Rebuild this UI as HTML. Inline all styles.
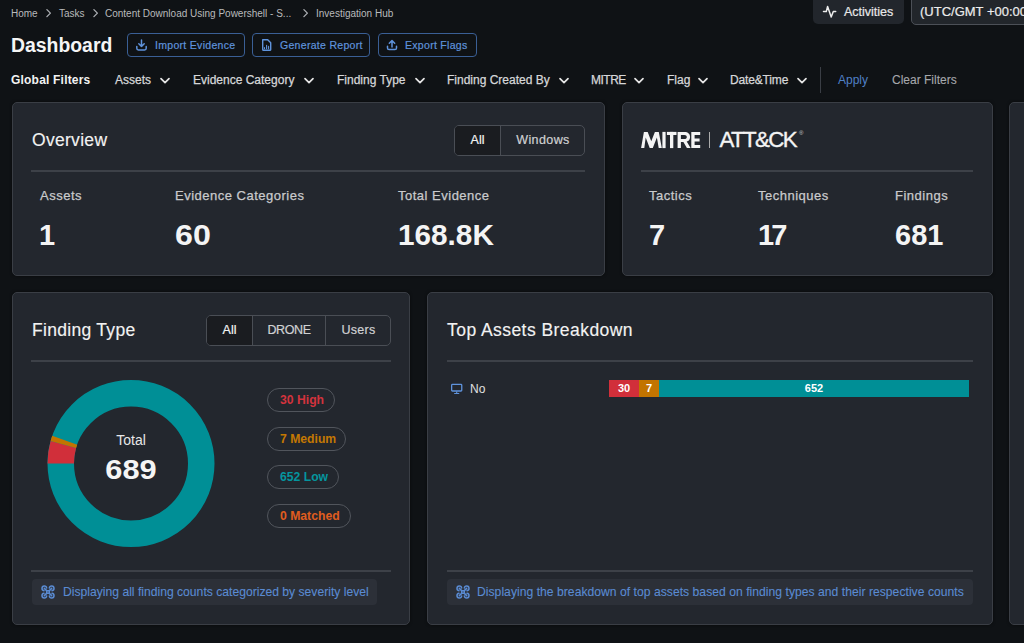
<!DOCTYPE html>
<html><head><meta charset="utf-8">
<style>
*{box-sizing:border-box;margin:0;padding:0}
html,body{width:1024px;height:643px;overflow:hidden;background:#0f1215;font-family:"Liberation Sans",sans-serif;color:#f2f2f2}
.a{position:absolute;white-space:nowrap}
.bc{font-size:10px;color:#b9babc;top:8px;line-height:12px}
.btn{position:absolute;top:33px;height:24px;border:1px solid #3a5f95;border-radius:4px}
.bt{position:absolute;top:39px;font-size:10.5px;line-height:12px;color:#5f93dc;letter-spacing:0.3px;-webkit-text-stroke:0.2px currentColor}
.flt{top:73px;font-size:12px;line-height:14px;color:#d6d7d9;-webkit-text-stroke:0.25px currentColor}
.card{position:absolute;background:#23272e;border:1px solid #3a3e45;border-radius:5px;box-shadow:0 0 3px rgba(0,0,0,.55)}
.div{position:absolute;height:2px;background:#3d4148}
.lbl{font-size:13px;color:#c9cacc;line-height:15px;letter-spacing:0.5px;-webkit-text-stroke:0.25px currentColor}
.num{font-size:29px;font-weight:700;color:#f4f4f4;line-height:32px}
.title{font-size:17.5px;color:#f2f2f2;line-height:20px;letter-spacing:0.3px;-webkit-text-stroke:0.15px currentColor}
.tog{position:absolute;border:1px solid #4a4e55;border-radius:5px;overflow:hidden;display:flex}
.tog div{height:100%;display:flex;align-items:center;justify-content:center;font-size:12.5px;-webkit-text-stroke:0.2px currentColor;color:#d0d1d3;border-left:1px solid #4a4e55;padding-bottom:1px}
.tog div:first-child{border-left:none;background:#1a1c20;color:#f2f2f2}
.pill{position:absolute;left:267px;height:24px;border:1px solid #51555c;border-radius:12px;font-size:12.2px;font-weight:700;line-height:22px;padding-left:12px}
.info{position:absolute;top:579px;height:26px;background:#2c3038;border-radius:4px;color:#5a8bd2;font-size:12.15px;line-height:26px;-webkit-text-stroke:0.1px currentColor}
.seg{position:absolute;top:380px;height:17px;color:#fff;font-size:11px;font-weight:700;line-height:17px;text-align:center}
</style></head><body>
<!-- breadcrumb -->
<div class="a bc" style="left:11px">Home</div>
<svg class="a" style="left:44px;top:8px" width="9" height="10" viewBox="0 0 9 10"><path d="M2.9 1.6L6.4 5.1 2.9 8.6" fill="none" stroke="#abaeb3" stroke-width="1.3" stroke-linecap="round" stroke-linejoin="round"/></svg>
<div class="a bc" style="left:59px">Tasks</div>
<svg class="a" style="left:91px;top:8px" width="9" height="10" viewBox="0 0 9 10"><path d="M2.9 1.6L6.4 5.1 2.9 8.6" fill="none" stroke="#abaeb3" stroke-width="1.3" stroke-linecap="round" stroke-linejoin="round"/></svg>
<div class="a bc" style="left:105px">Content Download Using Powershell - S...</div>
<svg class="a" style="left:301px;top:8px" width="9" height="10" viewBox="0 0 9 10"><path d="M2.9 1.6L6.4 5.1 2.9 8.6" fill="none" stroke="#abaeb3" stroke-width="1.3" stroke-linecap="round" stroke-linejoin="round"/></svg>
<div class="a bc" style="left:316px">Investigation Hub</div>

<!-- Activities / UTC -->
<div class="a" style="left:813px;top:-6px;width:91px;height:30px;background:#22262c;border-radius:5px"></div>
<svg class="a" style="left:822px;top:5px" width="15" height="14" viewBox="0 0 15 14"><path d="M1.5 6.6h2.8l1.3-5.2 3.6 10.6 2.1-5.4h2.4" fill="none" stroke="#ececec" stroke-width="1.5" stroke-linejoin="round" stroke-linecap="round"/></svg>
<div class="a" style="left:844px;top:5px;font-size:12.5px;line-height:14px;color:#e8e8e8;-webkit-text-stroke:0.2px currentColor">Activities</div>
<div class="a" style="left:911px;top:-6px;width:130px;height:31px;background:#22262b;border:1px solid #4c5057;border-radius:5px"></div>
<div class="a" style="left:920px;top:4px;font-size:13px;line-height:15px;color:#ececec;-webkit-text-stroke:0.2px currentColor">(UTC/GMT +00:00</div>

<!-- Title + buttons -->
<div class="a" style="left:11px;top:33.5px;font-size:19.4px;font-weight:700;line-height:22px;color:#f5f5f5">Dashboard</div>
<div class="btn" style="left:127px;width:118px"></div>
<div class="btn" style="left:252px;width:118px"></div>
<div class="btn" style="left:378px;width:99px"></div>
<svg class="a" style="left:135px;top:38px" width="13" height="14" viewBox="0 0 13 14"><path d="M6.5 2v6.5M3.8 5.8l2.7 2.7 2.7-2.7M1.8 8.5v1.8c0 1 .6 1.7 1.6 1.7h6.2c1 0 1.6-.7 1.6-1.7V8.5" fill="none" stroke="#5f93dc" stroke-width="1.5" stroke-linecap="round" stroke-linejoin="round"/></svg>
<svg class="a" style="left:260px;top:38px" width="13" height="14" viewBox="0 0 13 14"><path d="M2.7 1.8h5l3 3v6.6c0 .5-.3.8-.8.8H3.5c-.5 0-.8-.3-.8-.8z" fill="none" stroke="#5f93dc" stroke-width="1.4" stroke-linejoin="round"/><path d="M4.5 10.8V9.6M6.6 10.8V7.2M8.6 10.8V8.4" stroke="#5f93dc" stroke-width="1.1" stroke-linecap="round"/></svg>
<svg class="a" style="left:386px;top:38px" width="13" height="14" viewBox="0 0 13 14"><path d="M6 9V2.5M3.3 5.2L6 2.5l2.7 2.7M1.5 8.3v1.6c0 1 .6 1.7 1.6 1.7h5.8c1 0 1.6-.7 1.6-1.7V8.3" fill="none" stroke="#5f93dc" stroke-width="1.5" stroke-linecap="round" stroke-linejoin="round"/></svg>
<div class="bt" style="left:155px">Import Evidence</div>
<div class="bt" style="left:280px">Generate Report</div>
<div class="bt" style="left:405px">Export Flags</div>

<!-- filters -->
<div class="a flt" style="left:11px;font-weight:700;color:#f2f2f2;-webkit-text-stroke:0;letter-spacing:0.2px">Global Filters</div>
<div class="a flt" style="left:115px">Assets</div>
<div class="a flt" style="left:193px">Evidence Category</div>
<div class="a flt" style="left:337px">Finding Type</div>
<div class="a flt" style="left:447px">Finding Created By</div>
<div class="a flt" style="left:591px;letter-spacing:-0.5px">MITRE</div>
<div class="a flt" style="left:667px">Flag</div>
<div class="a flt" style="left:730px;letter-spacing:-0.15px">Date&amp;Time</div>
<svg class="a" style="left:159.00px;top:76px" width="12" height="9" viewBox="0 0 12 9"><path d="M2 2.6L6 6.6l4-4" fill="none" stroke="#e6e6e6" stroke-width="1.7" stroke-linecap="round" stroke-linejoin="round"/></svg>
<svg class="a" style="left:303.25px;top:76px" width="12" height="9" viewBox="0 0 12 9"><path d="M2 2.6L6 6.6l4-4" fill="none" stroke="#e6e6e6" stroke-width="1.7" stroke-linecap="round" stroke-linejoin="round"/></svg>
<svg class="a" style="left:414.00px;top:76px" width="12" height="9" viewBox="0 0 12 9"><path d="M2 2.6L6 6.6l4-4" fill="none" stroke="#e6e6e6" stroke-width="1.7" stroke-linecap="round" stroke-linejoin="round"/></svg>
<svg class="a" style="left:557.70px;top:76px" width="12" height="9" viewBox="0 0 12 9"><path d="M2 2.6L6 6.6l4-4" fill="none" stroke="#e6e6e6" stroke-width="1.7" stroke-linecap="round" stroke-linejoin="round"/></svg>
<svg class="a" style="left:633.25px;top:76px" width="12" height="9" viewBox="0 0 12 9"><path d="M2 2.6L6 6.6l4-4" fill="none" stroke="#e6e6e6" stroke-width="1.7" stroke-linecap="round" stroke-linejoin="round"/></svg>
<svg class="a" style="left:696.50px;top:76px" width="12" height="9" viewBox="0 0 12 9"><path d="M2 2.6L6 6.6l4-4" fill="none" stroke="#e6e6e6" stroke-width="1.7" stroke-linecap="round" stroke-linejoin="round"/></svg>
<svg class="a" style="left:796.10px;top:76px" width="12" height="9" viewBox="0 0 12 9"><path d="M2 2.6L6 6.6l4-4" fill="none" stroke="#e6e6e6" stroke-width="1.7" stroke-linecap="round" stroke-linejoin="round"/></svg>
<div class="a" style="left:820px;top:67px;width:1px;height:26px;background:#3a3e45"></div>
<div class="a flt" style="left:838px;color:#4f80c6;-webkit-text-stroke:0">Apply</div>
<div class="a flt" style="left:892px;color:#a6a8ac;-webkit-text-stroke:0.1px currentColor">Clear Filters</div>

<!-- cards -->
<div class="card" style="left:12px;top:102px;width:593px;height:174px"></div>
<div class="card" style="left:622px;top:102px;width:371px;height:174px"></div>
<div class="card" style="left:1009px;top:102px;width:40px;height:523px"></div>
<div class="card" style="left:12px;top:292px;width:398px;height:333px"></div>
<div class="card" style="left:427px;top:292px;width:566px;height:333px"></div>


<!-- overview content -->
<div class="a title" style="left:32px;top:130px">Overview</div>
<div class="tog" style="left:454px;top:125px;width:131px;height:31px">
  <div style="width:45px">All</div><div style="flex:1;letter-spacing:0.4px;padding-left:1px">Windows</div>
</div>
<div class="div" style="left:31px;top:170px;width:554px"></div>
<div class="a lbl" style="left:40px;top:188px">Assets</div>
<div class="a lbl" style="left:175px;top:188px">Evidence Categories</div>
<div class="a lbl" style="left:398px;top:188px">Total Evidence</div>
<div class="a num" style="left:39px;top:219px">1</div>
<div class="a num" style="left:175px;top:219px;transform:scaleX(1.11);transform-origin:0 0">60</div>
<div class="a num" style="left:398px;top:219px;transform:scaleX(1.025);transform-origin:0 0">168.8K</div>

<!-- mitre content -->
<svg class="a" style="left:638px;top:128px" width="66" height="24" viewBox="0 0 66 24"><g fill="#f4f4f4"><path d="M3.1 20.1L5.9 3.9H9.7L13.25 13.2 16.9 3.9H20.8L23.8 20.1H20.7L18.9 9.6 14.8 20.1H11.7L7.7 9.6 6.3 20.1Z"/><rect x="24.4" y="3.9" width="3.2" height="16.2"/><rect x="28.9" y="3.9" width="9.6" height="3.1"/><rect x="32" y="3.9" width="3.3" height="16.2"/><path d="M39.6 3.9H46.6C50 3.9 52.1 5.9 52.1 8.9 52.1 11.2 50.9 12.9 48.7 13.5L52.6 20.1H48.9L45.4 13.9H42.9V20.1H39.6ZM42.9 6.9V11H46.4C47.9 11 48.8 10.2 48.8 8.9 48.8 7.7 47.9 6.9 46.4 6.9Z"/><path d="M53.3 3.9H62.2V7H56.6V10.5H61.6V13.5H56.6V17H62.2V20.1H53.3Z"/></g></svg>
<div class="a" style="left:709px;top:132px;width:1px;height:16px;background:#aaa"></div>
<div class="a" style="left:719.5px;top:127.5px;font-size:22.3px;line-height:24px;letter-spacing:-1.65px;color:#f4f4f4;-webkit-text-stroke:0.35px currentColor">ATT&amp;CK</div>
<div class="a" style="left:799px;top:130px;font-size:6px;line-height:6px;color:#ccc">&reg;</div>
<div class="div" style="left:641px;top:170px;width:332px"></div>
<div class="a lbl" style="left:649px;top:188px">Tactics</div>
<div class="a lbl" style="left:758px;top:188px">Techniques</div>
<div class="a lbl" style="left:895px;top:188px">Findings</div>
<div class="a num" style="left:649px;top:219px">7</div>
<div class="a num" style="left:758px;top:219px;letter-spacing:-3px">17</div>
<div class="a num" style="left:895px;top:219px">681</div>

<!-- finding type content -->
<div class="a title" style="left:32px;top:320px">Finding Type</div>
<div class="tog" style="left:206px;top:315px;width:185px;height:31px">
  <div style="width:45px">All</div><div style="width:73px;letter-spacing:-0.4px">DRONE</div><div style="flex:1;letter-spacing:0.3px;padding-left:1px">Users</div>
</div>
<div class="div" style="left:31px;top:360px;width:360px"></div>
<div class="pill" style="top:388px;width:68px;color:#d3333d">30 High</div>
<div class="pill" style="top:427px;width:79px;color:#c47802">7 Medium</div>
<div class="pill" style="top:465px;width:72px;color:#05959e">652 Low</div>
<div class="pill" style="top:504px;width:84px;color:#e05d1e">0 Matched</div>
<svg class="a" style="left:47px;top:380px" width="168" height="168" viewBox="0 0 168 168"><circle cx="84" cy="83.5" r="70.25" fill="none" stroke="#008f96" stroke-width="26.5"/><path d="M0.50 83.50A83.5 83.5 0 0 1 3.61 60.94L29.12 68.10A57 57 0 0 0 27.00 83.50Z" fill="#d12f3a"/><path d="M3.61 60.94A83.5 83.5 0 0 1 5.21 55.86L30.21 64.63A57 57 0 0 0 29.12 68.10Z" fill="#c27400"/></svg>
<div class="a" style="left:91px;top:432px;width:80px;text-align:center;font-size:14px;line-height:16px;color:#e8e8e8">Total</div>
<div class="a" style="left:81px;top:455px;width:100px;text-align:center;font-size:27px;font-weight:700;line-height:30px;color:#f5f5f5;transform:scaleX(1.14);transform-origin:50px 0">689</div>
<div class="div" style="left:31px;top:570px;width:360px"></div>
<div class="info" style="left:32px;width:345px"><span style="position:absolute;left:31px">Displaying all finding counts categorized by severity level</span></div>
<svg class="a" style="left:39.6px;top:583.8px" width="16" height="16" viewBox="0 0 24 24"><g fill="none" stroke="#5a8bd2" stroke-width="2.3" stroke-linecap="round" stroke-linejoin="round"><path d="M10 10h4v4h-4z"/><path d="M10 10l-3.5-3.5M14 10l3.5-3.5M14 14l3.5 3.5M10 14l-3.5 3.5"/><path d="M9.96 6a3.5 3.5 0 1 0-3.96 3.96M18 9.96a3.5 3.5 0 1 0-3.96-3.96M14.04 18a3.5 3.5 0 1 0 3.96-3.96M6 14.04a3.5 3.5 0 1 0 3.96 3.96"/></g></svg>

<!-- top assets content -->
<div class="a title" style="left:447px;top:320px;letter-spacing:0.45px">Top Assets Breakdown</div>
<div class="div" style="left:447px;top:360px;width:526px"></div>
<svg class="a" style="left:450px;top:383px" width="14" height="12" viewBox="0 0 14 12"><rect x="1.65" y="1.4" width="10.1" height="6.6" rx="0.8" fill="none" stroke="#5f93dc" stroke-width="1.3"/><path d="M6.7 8.7v1.5M4.6 10.5h4.2" stroke="#5f93dc" stroke-width="1.1" stroke-linecap="round"/></svg>
<div class="a" style="left:470px;top:382px;font-size:12px;line-height:14px;color:#e0e0e0">No</div>
<div class="seg" style="left:609px;width:30px;background:#d12f3a">30</div>
<div class="seg" style="left:639px;width:20px;background:#c27400">7</div>
<div class="seg" style="left:659px;width:310px;background:#008f96">652</div>
<div class="div" style="left:447px;top:570px;width:526px"></div>
<div class="info" style="left:447px;width:526px"><span style="position:absolute;left:30px;letter-spacing:0.025px">Displaying the breakdown of top assets based on finding types and their respective counts</span></div>
<svg class="a" style="left:454.85px;top:583.8px" width="16" height="16" viewBox="0 0 24 24"><g fill="none" stroke="#5a8bd2" stroke-width="2.3" stroke-linecap="round" stroke-linejoin="round"><path d="M10 10h4v4h-4z"/><path d="M10 10l-3.5-3.5M14 10l3.5-3.5M14 14l3.5 3.5M10 14l-3.5 3.5"/><path d="M9.96 6a3.5 3.5 0 1 0-3.96 3.96M18 9.96a3.5 3.5 0 1 0-3.96-3.96M14.04 18a3.5 3.5 0 1 0 3.96-3.96M6 14.04a3.5 3.5 0 1 0 3.96 3.96"/></g></svg>

</body></html>
